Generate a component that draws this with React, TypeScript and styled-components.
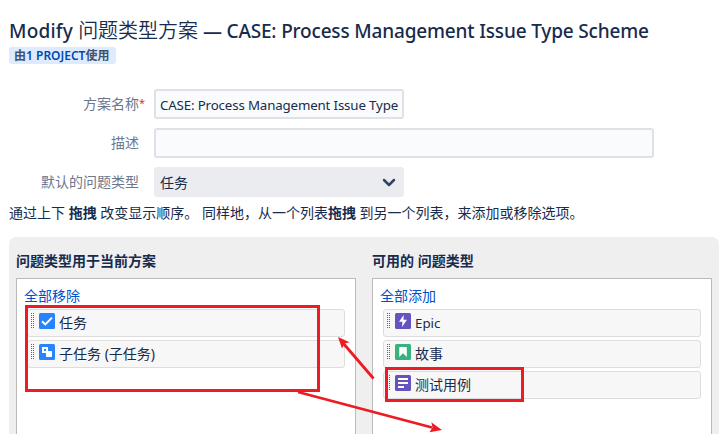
import React from "react";
import styled, { createGlobalStyle } from "styled-components";

const GlobalStyle = createGlobalStyle`
  * { box-sizing: border-box; }
  body {
    margin: 0;
    background: #fff;
    overflow: hidden;
    color: #172b4d;
    font: 14px/20px "Noto Sans", "Noto Sans CJK SC", sans-serif;
  }
`;

const Page = styled.main`
  position: relative;
  width: 725px;
  height: 434px;
  overflow: hidden;
  padding: 17px 6px 0 9px;
`;

const Latin = styled.span<{ $size: number; $spacing?: number }>`
  font-size: ${(p) => p.$size}px;
  letter-spacing: ${(p) => p.$spacing ?? 0}px;
`;

const Title = styled.h1`
  margin: 0;
  height: 30px;
  font-size: 20px;
  line-height: 28px;
  font-weight: 500;
  white-space: nowrap;
`;

const TitleCjk = styled.span`
  font-weight: 350;
`;

const Badge = styled.div`
  width: 107px;
  height: 17px;
  padding: 0 5px;
  border-radius: 3px;
  background: #deebff;
  color: #42526e;
  font-size: 12px;
  line-height: 17px;
  font-weight: 600;
  white-space: nowrap;

  a { color: #0049b0; }
`;

const Form = styled.form`
  display: flex;
  flex-direction: column;
  gap: 9px;
  margin-top: 25px;
`;

const Row = styled.div`
  display: flex;
  gap: 15px;
  height: 30px;
`;

const Label = styled.label`
  position: relative;
  width: 130px;
  line-height: 30px;
  text-align: right;
  color: #6b778c;
`;

const Required = styled.span`
  position: absolute;
  left: 100%;
  top: -1px;
  color: #de350b;
  font-size: 11px;
`;

const Input = styled.div<{ $width: number }>`
  width: ${(p) => p.$width}px;
  height: 30px;
  padding: 0 4px;
  border: 2px solid #dfe1e6;
  border-radius: 3px;
  background: #fafbfc;
  line-height: 28px;
  white-space: nowrap;
`;

const Select = styled.div`
  display: flex;
  align-items: center;
  justify-content: space-between;
  width: 250px;
  height: 30px;
  padding: 1px 8px 0 6px;
  border-radius: 3px;
  background: #ebecf0;
`;

const Hint = styled.p`
  margin: 6px 0 0;
  height: 34px;
  white-space: nowrap;
`;

const Panel = styled.section`
  display: grid;
  grid-template-columns: 340px 340px;
  gap: 16px;
  height: 240px;
  padding: 14px 7px 0;
  border-radius: 7px;
  background: #efefef;
`;

const Heading = styled.h2`
  margin: 0;
  height: 27px;
  font-size: 14px;
  line-height: 20px;
  font-weight: 700;
`;

const List = styled.div`
  height: 220px;
  padding: 8px 10px 0;
  border: 1px solid #bbb;
  background: #fff;
`;

const BulkLink = styled.a`
  display: block;
  height: 22px;
  margin-left: -3px;
  line-height: 18px;
  color: #0052cc;
`;

const Item = styled.div`
  display: flex;
  align-items: flex-start;
  width: 318px;
  height: 28px;
  margin-bottom: 3px;
  padding: 3px 0 0 3px;
  border: 1px solid #ddd;
  border-radius: 3px;
  background: #f7f7f7;
`;

const Grip = styled.span`
  flex: none;
  width: 3px;
  height: 15px;
  margin-right: 5px;
  background: conic-gradient(from 270deg at 1px 1px, #666 90deg, transparent 0) 0 0 / 2px 2px;
`;

const ItemIcon = styled.svg`
  flex: none;
  width: 16px;
  height: 16px;
  margin-right: 4px;
`;

const Annotations = styled.svg`
  position: absolute;
  inset: 0;
  pointer-events: none;
`;

type Kind = "task" | "subtask" | "epic" | "story" | "testcase";

const fills: Record<Kind, string> = {
  task: "#2684ff",
  subtask: "#2684ff",
  epic: "#6554c0",
  story: "#36b37e",
  testcase: "#6554c0",
};

const glyphs: Record<Kind, React.ReactNode> = {
  task: <path d="M3 8.2 6.3 11.4 13 4.6" fill="none" stroke="#fff" strokeWidth="2" />,
  subtask: (
    <>
      <rect x="4" y="4" width="4" height="4" fill="none" stroke="#fff" strokeWidth="2" />
      <rect x="7" y="7" width="6" height="6" rx=".6" fill="#fff" />
    </>
  ),
  epic: <path d="M8.7 2 4 8.8h3.4L7 14l5-7.2H8.5z" fill="#fff" />,
  story: <path d="M4.2 3.7q0-.7.7-.7h6.2q.7 0 .7.7V13L8 9.3 4.2 13z" fill="#fff" />,
  testcase: <path d="M3 4h10M3 8h10M3 12h6" fill="none" stroke="#fff" strokeWidth="1.9" />,
};

function IssueType({ kind, children }: { kind: Kind; children: React.ReactNode }) {
  return (
    <Item>
      <Grip />
      <ItemIcon viewBox="0 0 16 16">
        <rect width="16" height="16" rx="1.5" fill={fills[kind]} />
        {glyphs[kind]}
      </ItemIcon>
      <span>{children}</span>
    </Item>
  );
}

export default function App() {
  return (
    <>
      <GlobalStyle />
      <Page>
        <Title>
          <Latin $size={19} $spacing={0.2}>Modify </Latin>
          <TitleCjk>问题类型方案</TitleCjk>
          <Latin $size={19} $spacing={-0.17}> — CASE: Process Management Issue Type Scheme</Latin>
        </Title>
        <Badge>
          由<a>1 PROJECT</a>使用
        </Badge>
        <Form>
          <Row>
            <Label>方案名称<Required>*</Required></Label>
            <Input $width={250}>
              <Latin $size={13.3} $spacing={-0.15}>CASE: Process Management Issue Type</Latin>
            </Input>
          </Row>
          <Row>
            <Label>描述</Label>
            <Input $width={500} />
          </Row>
          <Row>
            <Label>默认的问题类型</Label>
            <Select>
              任务
              <svg width="14" height="10" viewBox="0 0 14 10">
                <path d="m2 2 5 5 5-5" fill="none" stroke="#344563" strokeWidth="2.5" strokeLinecap="round" strokeLinejoin="round" />
              </svg>
            </Select>
          </Row>
        </Form>
        <Hint>
          通过上下 <b>拖拽</b> 改变显示顺序。 同样地，从一个列表<b>拖拽</b> 到另一个列表，来添加或移除选项。
        </Hint>
        <Panel>
          <div>
            <Heading>问题类型用于当前方案</Heading>
            <List>
              <BulkLink>全部移除</BulkLink>
              <IssueType kind="task">任务</IssueType>
              <IssueType kind="subtask">子任务 (子任务)</IssueType>
            </List>
          </div>
          <div>
            <Heading>可用的 问题类型</Heading>
            <List>
              <BulkLink>全部添加</BulkLink>
              <IssueType kind="epic"><Latin $size={13.3}>Epic</Latin></IssueType>
              <IssueType kind="story">故事</IssueType>
              <IssueType kind="testcase">测试用例</IssueType>
            </List>
          </div>
        </Panel>
        <Annotations width="725" height="434" viewBox="0 0 725 434">
          <g fill="none" stroke="#ed1c24">
            <rect x="26.5" y="306.5" width="292" height="84" strokeWidth="3" />
            <rect x="386.5" y="368.5" width="136" height="32" strokeWidth="3" />
            <path d="M373.5 378.5 343 343M298 392l134 35.5" strokeWidth="2.8" />
          </g>
          <path d="m338 337 11.5 5.2-5 1.4-2.5 5zM442 430l-12.5 2.2 3-4.6-1.2-5.4z" fill="#ed1c24" />
        </Annotations>
      </Page>
    </>
  );
}
